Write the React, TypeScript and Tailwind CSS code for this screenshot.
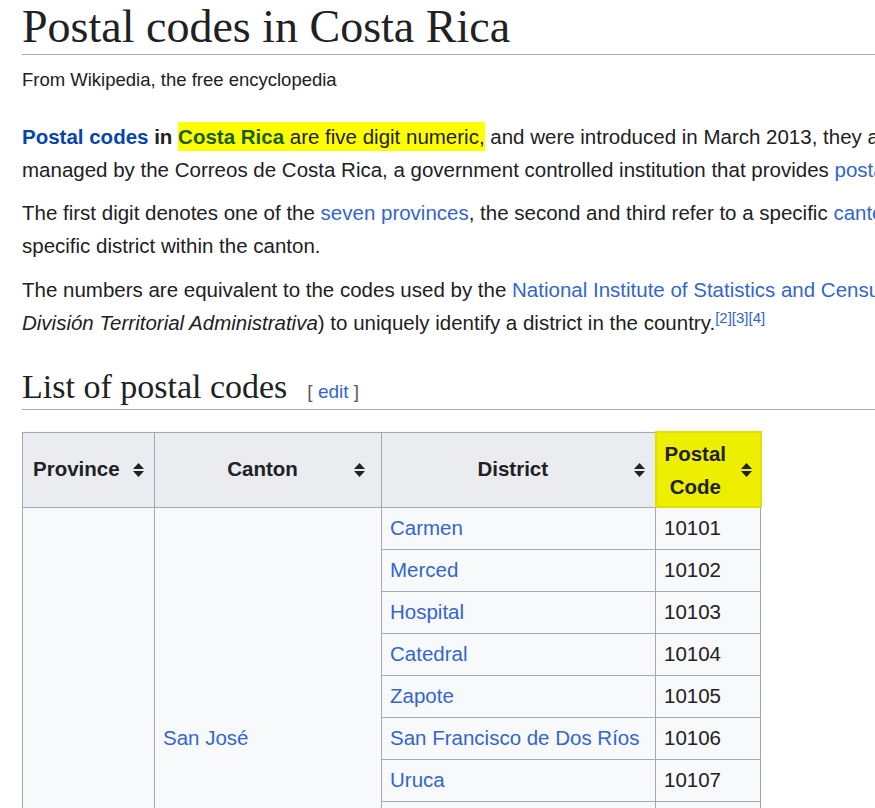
import React from "react";

const Sort = () => (
  <svg width="11" height="14" viewBox="0 0 11 14" className="shrink-0"><path d="M5.5 0L11 6H0z M5.5 14L0 8h11z" fill="#202122"/></svg>
);

const districts = ["Carmen","Merced","Hospital","Catedral","Zapote","San Francisco de Dos Ríos","Uruca","Mata Redonda","Pavas","Hatillo","San Sebastián"];

export default function App() {
  return (
    <div className="w-[875px] h-[808px] overflow-hidden bg-white text-[#202122]" style={{ fontFamily: '"Liberation Sans", Arial, sans-serif' }}>
      <div className="pl-[22px] w-[1200px]">
        <h1 className="text-[46px] leading-[52px] pt-[1px] pb-[1px] border-b border-[#a2a9b1] w-[853px]" style={{ fontFamily: '"Liberation Serif", serif' }}>Postal codes in Costa Rica</h1>
        <div className="text-[18.5px] mt-[13px] leading-[24px]">From Wikipedia, the free encyclopedia</div>
        <div className="text-[20.5px] leading-[33px] whitespace-nowrap mt-[28px]">
          <p><b className="text-[#0645ad]">Postal codes</b> <b>in</b> <span className="bg-[#ffff00] py-[3px]"><b className="text-[#1a5c00]">Costa Rica</b> are five digit numeric,</span> and were introduced in March 2013, they are<br/>managed by the Correos de Costa Rica, a government controlled institution that provides <span className="text-[#3366cc]">postal</span></p>
          <p className="mt-[10px]">The first digit denotes one of the <span className="text-[#3366cc]">seven provinces</span>, the second and third refer to a specific <span className="text-[#3366cc]">canton</span><br/>specific district within the canton.</p>
          <p className="mt-[11px]">The numbers are equivalent to the codes used by the <span className="text-[#3366cc]">National Institute of Statistics and Census</span><br/><i>División Territorial Administrativa</i>) to uniquely identify a district in the country.<sup className="text-[15px] text-[#3366cc]">[2][3][4]</sup></p>
        </div>
        <div className="flex items-baseline border-b border-[#a2a9b1] w-[853px] mt-[28px] pb-[2px]">
          <h2 className="text-[34px] leading-[40px]" style={{ fontFamily: '"Liberation Serif", serif' }}>List of postal codes</h2>
          <span className="ml-[20px] text-[19px] text-[#54595d]">[ <span className="text-[#3366cc]">edit</span> ]</span>
        </div>
        <table className="mt-[21px] border-collapse text-[20.5px] bg-[#f8f9fa] border border-[#a2a9b1]">
          <thead>
            <tr className="h-[75px] bg-[#eaecf0] font-bold">
              <th className="w-[132px] border border-[#a2a9b1] px-[10px]"><div className="flex items-center justify-between"><span>Province</span><Sort/></div></th>
              <th className="w-[227px] border border-[#a2a9b1] px-[16px]"><div className="flex items-center justify-between"><span className="flex-1 text-center">Canton</span><Sort/></div></th>
              <th className="w-[274px] border border-[#a2a9b1] px-[10px]"><div className="flex items-center justify-between"><span className="flex-1 text-center">District</span><Sort/></div></th>
              <th className="w-[105px] border-2 border-[#e0e000] bg-[#eeee00] px-[8px] leading-[33px]"><div className="flex items-center justify-between"><span>Postal<br/>Code</span><Sort/></div></th>
            </tr>
          </thead>
          <tbody>
            {districts.map((d, i) => (
              <tr key={d} className="h-[42px]">
                {i === 0 && <td rowSpan={40} className="border border-[#a2a9b1]"></td>}
                {i === 0 && <td rowSpan={11} className="border border-[#a2a9b1] px-[8px] text-[#3366cc]">San José</td>}
                <td className="border border-[#a2a9b1] px-[8px] text-[#3366cc] whitespace-nowrap">{d}</td>
                <td className="border border-[#a2a9b1] px-[8px]">{10101 + i}</td>
              </tr>
            ))}
          </tbody>
        </table>
      </div>
    </div>
  );
}
